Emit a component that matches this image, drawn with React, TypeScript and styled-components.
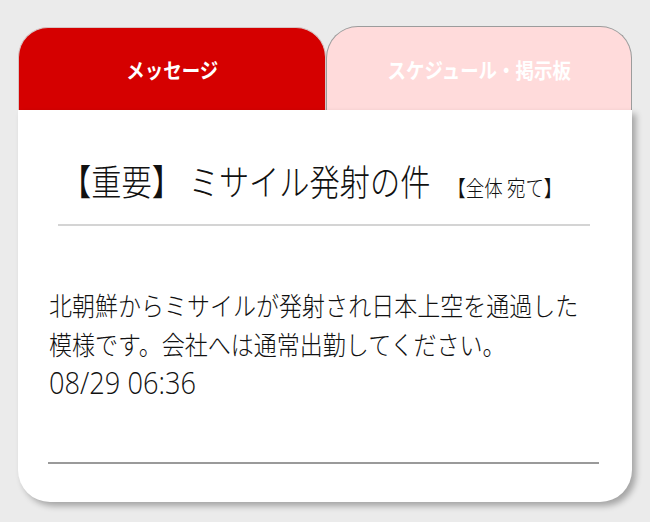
import React from "react";
import styled, { createGlobalStyle } from "styled-components";

const GlobalStyle = createGlobalStyle`
  html, body {
    margin: 0;
    padding: 0;
    background: #ebebeb;
  }
  body {
    font-family: "Noto Sans CJK JP", "Noto Sans", sans-serif;
  }
`;

const Page = styled.div`
  width: 650px;
  height: 522px;
  padding: 26px 18px 0 18px;
  box-sizing: border-box;
`;

const Board = styled.div`
  width: 614px;
  display: flex;
  flex-direction: column;
`;

const TabBar = styled.div`
  display: grid;
  grid-template-columns: 308px 306px;
  height: 84px;
  align-items: end;
`;

const Tab = styled.div<{ $active?: boolean }>`
  height: ${(p) => (p.$active ? "83px" : "84px")};
  display: flex;
  align-items: center;
  justify-content: center;
  box-sizing: border-box;
  border-radius: ${(p) => (p.$active ? "30px 30px 0 0" : "32px 32px 0 0")};
  background: ${(p) => (p.$active ? "#d50000" : "#ffdbdb")};
  border: ${(p) => (p.$active ? "1px solid #d6c4c4" : "1.5px solid #9c9c9c")};
  border-bottom: none;
  color: #fff;
  font-size: 21px;
  font-weight: 700;
`;

const TabLabel = styled.span`
  display: inline-block;
  white-space: nowrap;
  transform: scaleX(0.88);
`;

const Card = styled.div`
  height: 392px;
  box-sizing: border-box;
  padding-top: 52px;
  background: #fff;
  border-radius: 0 0 32px 32px;
  box-shadow: 4px 4px 6px rgba(0, 0, 0, 0.3);
  display: flex;
  flex-direction: column;
`;

const TitleRow = styled.h1`
  margin: 0 0 0 43px;
  display: flex;
  align-items: baseline;
  white-space: nowrap;
  transform: scaleX(0.84);
  transform-origin: left center;
  font-size: 36px;
  line-height: 36px;
  font-weight: 300;
  color: #111;
`;

const Audience = styled.span`
  margin-left: 20px;
  font-size: 22px;
  line-height: 1;
`;

const Rule = styled.hr<{ $strong?: boolean }>`
  border: none;
  height: 2px;
  background: ${(p) => (p.$strong ? "#9a9a9a" : "#d4d4d4")};
  margin: ${(p) => (p.$strong ? "auto 33px 38px 30px" : "26px 42px 0 40px")};
`;

const Message = styled.p`
  margin: 60px 0 0 31px;
  white-space: nowrap;
  transform: scaleX(0.885);
  transform-origin: left top;
  font-size: 26px;
  line-height: 38.5px;
  font-weight: 300;
  color: #111;
`;

const Stamp = styled.div`
  margin-left: 31px;
  transform: scaleX(0.85);
  transform-origin: left top;
  font-family: "Open Sans", "Noto Sans", sans-serif;
  font-size: 32px;
  line-height: 38px;
  font-weight: 300;
  color: #111;
`;

const App = () => {
  return (
    <Page>
      <GlobalStyle />
      <Board>
        <TabBar>
          <Tab $active>
            <TabLabel>メッセージ</TabLabel>
          </Tab>
          <Tab>
            <TabLabel>スケジュール・掲示板</TabLabel>
          </Tab>
        </TabBar>

        <Card>
          <TitleRow>
            <span>【重要】 ミサイル発射の件</span>
            <Audience>【全体 宛て】</Audience>
          </TitleRow>
          <Rule />

          <Message>
            北朝鮮からミサイルが発射され日本上空を通過した
            <br />
            模様です。会社へは通常出勤してください。
          </Message>
          <Stamp>08/29 06:36</Stamp>

          <Rule $strong />
        </Card>
      </Board>
    </Page>
  );
};

export default App;
